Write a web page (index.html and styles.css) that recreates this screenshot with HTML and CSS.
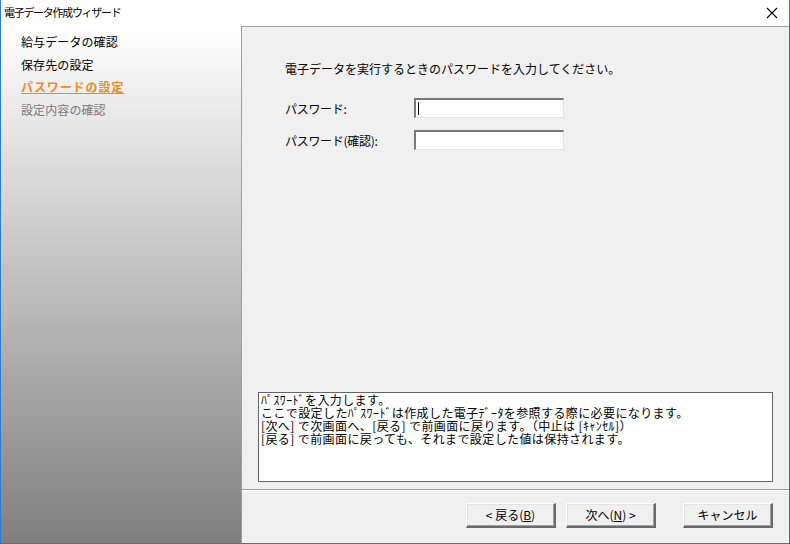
FILE: index.html
```html
<!DOCTYPE html>
<html lang="ja">
<head>
<meta charset="utf-8">
<title>電子データ作成ウィザード</title>
<link rel="stylesheet" href="styles.css">
</head>
<body>
<div class="window">
  <div class="titlebar">
    <span class="title">電子データ作成ウィザード</span>
    <svg class="close" width="12" height="12" viewBox="0 0 12 12"><path d="M1 1L11 11M11 1L1 11" stroke="#000" stroke-width="1.1" fill="none"/></svg>
  </div>
  <div class="main">
    <div class="side">
      <div class="step">給与データの確認</div>
      <div class="step">保存先の設定</div>
      <div class="step current">パスワードの設定</div>
      <div class="step todo">設定内容の確認</div>
    </div>
    <div class="pane">
      <div class="content">
        <p class="lead">電子データを実行するときのパスワードを入力してください。</p>
        <div class="row">
          <span class="label">パスワード:</span>
          <span class="input"><span class="caret"></span></span>
        </div>
        <div class="row">
          <span class="label">パスワード(確認):</span>
          <span class="input"></span>
        </div>
        <div class="help">
          <div class="line">ﾊﾟｽﾜｰﾄﾞを入力します。</div>
          <div class="line">ここで設定したﾊﾟｽﾜｰﾄﾞは作成した電子ﾃﾞｰﾀを参照する際に必要になります。</div>
          <div class="line">[次へ] で次画面へ、[戻る] で前画面に戻ります。（中止は [ｷｬﾝｾﾙ]）</div>
          <div class="line">[戻る] で前画面に戻っても、それまで設定した値は保持されます。</div>
        </div>
      </div>
      <div class="buttons">
        <button class="btn">&lt; 戻る(<u>B</u>)</button>
        <button class="btn">次へ(<u>N</u>) &gt;</button>
        <button class="btn cancel">キャンセル</button>
      </div>
    </div>
  </div>
</div>
</body>
</html>
```
FILE: styles.css
```css
html, body {
  margin: 0;
  padding: 0;
  background: #fff;
}
body {
  font-family: "Noto Sans CJK JP", "Noto Sans", sans-serif;
  font-size: 12px;
  color: #000;
}
.window {
  width: 790px;
  height: 544px;
  box-sizing: border-box;
  border: 1px solid #2b7bd0;
  border-top: none;
  display: flex;
  flex-direction: column;
  overflow: hidden;
}
.titlebar {
  height: 26px;
  flex: none;
  display: flex;
  align-items: center;
  justify-content: space-between;
  padding: 0 11px 0 3px;
  background: #fff;
}
.title {
  font-size: 11px;
  letter-spacing: -1.3px;
  line-height: 14px;
  margin-top: -2px;
}
.close {
  display: block;
}
.main {
  flex: 1;
  display: flex;
  min-height: 0;
}
.side {
  width: 240px;
  flex: none;
  background: linear-gradient(to bottom, #ffffff 0%, #7f7f7f 100%);
  padding-top: 5px;
  padding-left: 20px;
  box-sizing: border-box;
}
.step {
  font-size: 12px;
  line-height: 22.7px;
  color: #000;
  letter-spacing: 0.1px;
}
.step.current {
  color: #f28a1e;
  font-weight: bold;
  text-decoration: underline;
  letter-spacing: 0.9px;
}
.step.todo {
  color: #7a7a7a;
}
.pane {
  flex: 1;
  display: flex;
  flex-direction: column;
  background: #f0f0f0;
  border-left: 1px solid #a0a0a0;
  border-top: 1px solid #a0a0a0;
}
.content {
  flex: 1;
  display: flex;
  flex-direction: column;
  padding: 34px 16px 7px 16px;
  border-bottom: 1px solid #a0a0a0;
}
.lead {
  margin: 0 0 21px 27px;
  line-height: 16px;
  font-size: 12px;
}
.row {
  display: flex;
  align-items: center;
  height: 20px;
  margin-left: 27px;
  margin-bottom: 12px;
}
.label {
  width: 129px;
  font-size: 12px;
  letter-spacing: -0.3px;
}
.input {
  width: 150px;
  height: 20px;
  box-sizing: border-box;
  background: #fff;
  border-style: solid;
  border-width: 2px 1px 1px 2px;
  border-color: #7a7a7a #e3e3e3 #e3e3e3 #7a7a7a;
  position: relative;
}
.caret {
  position: absolute;
  left: 2px;
  top: 2px;
  width: 1px;
  height: 13px;
  background: #000;
}
.help {
  margin-top: auto;
  height: 90px;
  box-sizing: border-box;
  border: 1px solid #646464;
  background: #fff;
  padding: 0 0 0 2px;
  font-size: 12px;
  letter-spacing: 0.4px;
  white-space: nowrap;
}
.line {
  height: 13px;
  line-height: 13px;
}
.buttons {
  height: 53px;
  flex: none;
  border-top: 1px solid #fff;
  display: flex;
  align-items: flex-start;
  padding: 12px 16px 0 0;
  justify-content: flex-end;
  box-sizing: border-box;
}
.btn {
  width: 90px;
  height: 25px;
  margin-left: 10px;
  font-family: inherit;
  font-size: 12px;
  color: #000;
  background: #f0f0f0;
  border-style: solid;
  border-width: 1px 2px 2px 1px;
  border-color: #ffffff #696969 #696969 #ffffff;
  box-shadow: inset -1px -1px 0 #a0a0a0, inset 1px 1px 0 #e3e3e3;
  padding: 0;
  line-height: 20px;
}
.btn u {
  text-decoration: underline;
}
.btn.cancel {
  margin-left: 27px;
}
```
